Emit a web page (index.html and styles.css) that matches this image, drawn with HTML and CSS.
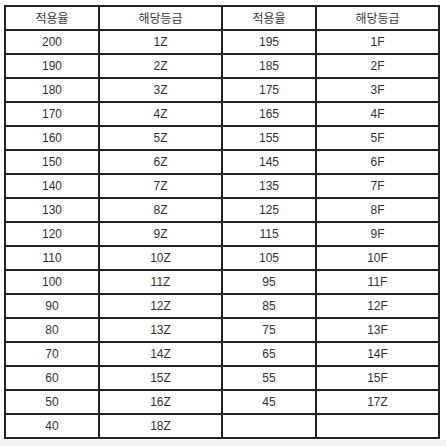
FILE: index.html
```html
<!DOCTYPE html>
<html lang="ko">
<head>
<meta charset="utf-8">
<link rel="stylesheet" href="styles.css">
</head>
<body>
<div class="page">
<table class="grade">
<colgroup><col class="c-rate"><col class="c-grade"><col class="c-rate"><col class="c-grade"></colgroup>
<thead>
<tr><th>적용율</th><th>해당등급</th><th>적용율</th><th>해당등급</th></tr>
</thead>
<tbody>
<tr><td>200</td><td>1Z</td><td>195</td><td>1F</td></tr>
<tr><td>190</td><td>2Z</td><td>185</td><td>2F</td></tr>
<tr><td>180</td><td>3Z</td><td>175</td><td>3F</td></tr>
<tr><td>170</td><td>4Z</td><td>165</td><td>4F</td></tr>
<tr><td>160</td><td>5Z</td><td>155</td><td>5F</td></tr>
<tr><td>150</td><td>6Z</td><td>145</td><td>6F</td></tr>
<tr><td>140</td><td>7Z</td><td>135</td><td>7F</td></tr>
<tr><td>130</td><td>8Z</td><td>125</td><td>8F</td></tr>
<tr><td>120</td><td>9Z</td><td>115</td><td>9F</td></tr>
<tr><td>110</td><td>10Z</td><td>105</td><td>10F</td></tr>
<tr><td>100</td><td>11Z</td><td>95</td><td>11F</td></tr>
<tr><td>90</td><td>12Z</td><td>85</td><td>12F</td></tr>
<tr><td>80</td><td>13Z</td><td>75</td><td>13F</td></tr>
<tr><td>70</td><td>14Z</td><td>65</td><td>14F</td></tr>
<tr><td>60</td><td>15Z</td><td>55</td><td>15F</td></tr>
<tr><td>50</td><td>16Z</td><td>45</td><td>17Z</td></tr>
<tr><td>40</td><td>18Z</td><td></td><td></td></tr>
</tbody>
</table>
</div>
</body>
</html>
```
FILE: styles.css
```css
html, body {
  margin: 0;
  padding: 0;
  background: #f2f2f2;
}
.page {
  background: #ffffff;
  height: 440px;
  padding: 5px 0 0 4px;
  box-sizing: border-box;
}
.grade {
  border-collapse: separate;
  border-spacing: 0;
  table-layout: fixed;
  width: 436px;
  border-top: 2px solid #222;
  border-left: 2px solid #222;
  font-family: "Liberation Sans", "Noto Sans CJK KR", sans-serif;
  font-size: 12px;
  color: #333;
}
.c-rate { width: 94px; }
.c-grade { width: 123px; }
.grade th,
.grade td {
  height: 22px;
  padding: 0;
  border-right: 2px solid #222;
  border-bottom: 2px solid #222;
  text-align: center;
  vertical-align: middle;
  font-weight: normal;
  line-height: 14px;
  box-sizing: content-box;
}
.grade th {
  font-family: "Noto Sans CJK KR", sans-serif;
  font-size: 12px;
  color: #3a3a3a;
}
```
